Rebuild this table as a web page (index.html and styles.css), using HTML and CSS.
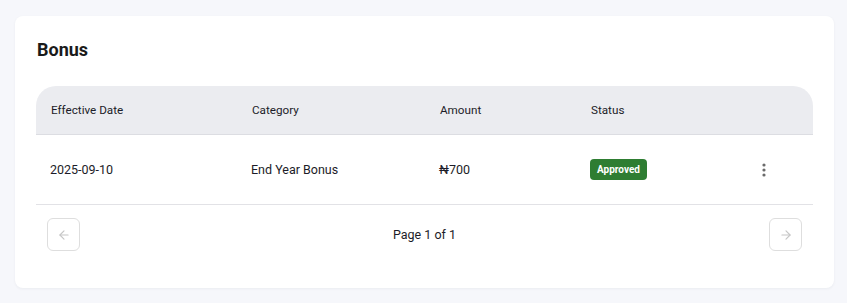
FILE: index.html
```html
<!DOCTYPE html>
<html lang="en">

<head>
    <meta charset="UTF-8">
    <meta name="viewport" content="width=device-width, initial-scale=1.0">
    <title>Bonus</title>
    <link rel="stylesheet" href="styles.css">
</head>

<body>

    <section class="card">
        <h2 class="card-title">Bonus</h2>

        <div class="table">
            <div class="table-row table-head">
                <div class="cell">Effective Date</div>
                <div class="cell">Category</div>
                <div class="cell">Amount</div>
                <div class="cell">Status</div>
                <div class="cell"></div>
            </div>

            <div class="table-row table-body">
                <div class="cell">2025-09-10</div>
                <div class="cell">End Year Bonus</div>
                <div class="cell">&#8358;700</div>
                <div class="cell"><span class="badge badge-approved">Approved</span></div>
                <div class="cell">
                    <button class="kebab" type="button" aria-label="More">
                        <svg width="4" height="14" viewBox="0 0 4 14">
                            <circle cx="2" cy="2" r="1.6" />
                            <circle cx="2" cy="7" r="1.6" />
                            <circle cx="2" cy="12" r="1.6" />
                        </svg>
                    </button>
                </div>
            </div>
        </div>

        <div class="pager">
            <button class="pager-btn" type="button" disabled aria-label="Previous">
                <svg width="14" height="14" viewBox="0 0 24 24" fill="none" stroke="currentColor" stroke-width="2" stroke-linecap="round" stroke-linejoin="round">
                    <path d="M19 12H5" />
                    <path d="M12 19l-7-7 7-7" />
                </svg>
            </button>
            <span class="pager-text">Page 1 of 1</span>
            <button class="pager-btn" type="button" disabled aria-label="Next">
                <svg width="14" height="14" viewBox="0 0 24 24" fill="none" stroke="currentColor" stroke-width="2" stroke-linecap="round" stroke-linejoin="round">
                    <path d="M5 12h14" />
                    <path d="M12 5l7 7-7 7" />
                </svg>
            </button>
        </div>
    </section>

</body>

</html>
```

FILE: styles.css
```css
body {
    font-family: Roboto, 'Liberation Sans', sans-serif;
    background: #f6f7fb;
    margin: 0;
    padding: 16px 13px 15px 15px;
    color: #1c1c28;
}

.card {
    background: #fff;
    border-radius: 8px;
    box-shadow: 0 1px 3px rgba(20, 30, 60, 0.05);
    padding: 22px 21px 37px 21px;
}

.card-title {
    font-size: 18px;
    font-weight: 700;
    margin: 0 0 24px 1px;
    line-height: 24px;
    color: #1a1a1a;
}

.table-row {
    display: grid;
    grid-template-columns: 201px 188px 151px 173px 1fr;
    align-items: center;
}

.cell {
    padding-left: 15px;
    font-size: 11.7px;
}

.table-head {
    background: #ebecf0;
    border-radius: 20px 20px 0 0;
    height: 48px;
    border-bottom: 1px solid #dcdde2;
}

.table-body {
    height: 69px;
    border-bottom: 1px solid #e2e2e6;
}

.table-body .cell {
    font-size: 12.5px;
    padding-left: 14px;
}

.badge {
    display: inline-block;
    font-size: 10px;
    font-weight: 700;
    color: #fff;
    padding: 4px 7px;
    border-radius: 4px;
    line-height: 13px;
}

.badge-approved {
    background: #2e7d32;
}

.kebab {
    border: 0;
    background: none;
    padding: 0;
    display: flex;
    fill: #6b6b6b;
    margin-left: -1px;
}

.pager {
    display: flex;
    align-items: center;
    justify-content: space-between;
    padding: 13px 11px 0 11px;
}

.pager-btn {
    width: 33px;
    height: 33px;
    border: 1px solid #dedede;
    border-radius: 6px;
    background: #fff;
    color: #c6c6c6;
    display: flex;
    align-items: center;
    justify-content: center;
    padding: 0;
}

.pager-text {
    font-size: 12.5px;
    color: #1c1c28;
}
```
